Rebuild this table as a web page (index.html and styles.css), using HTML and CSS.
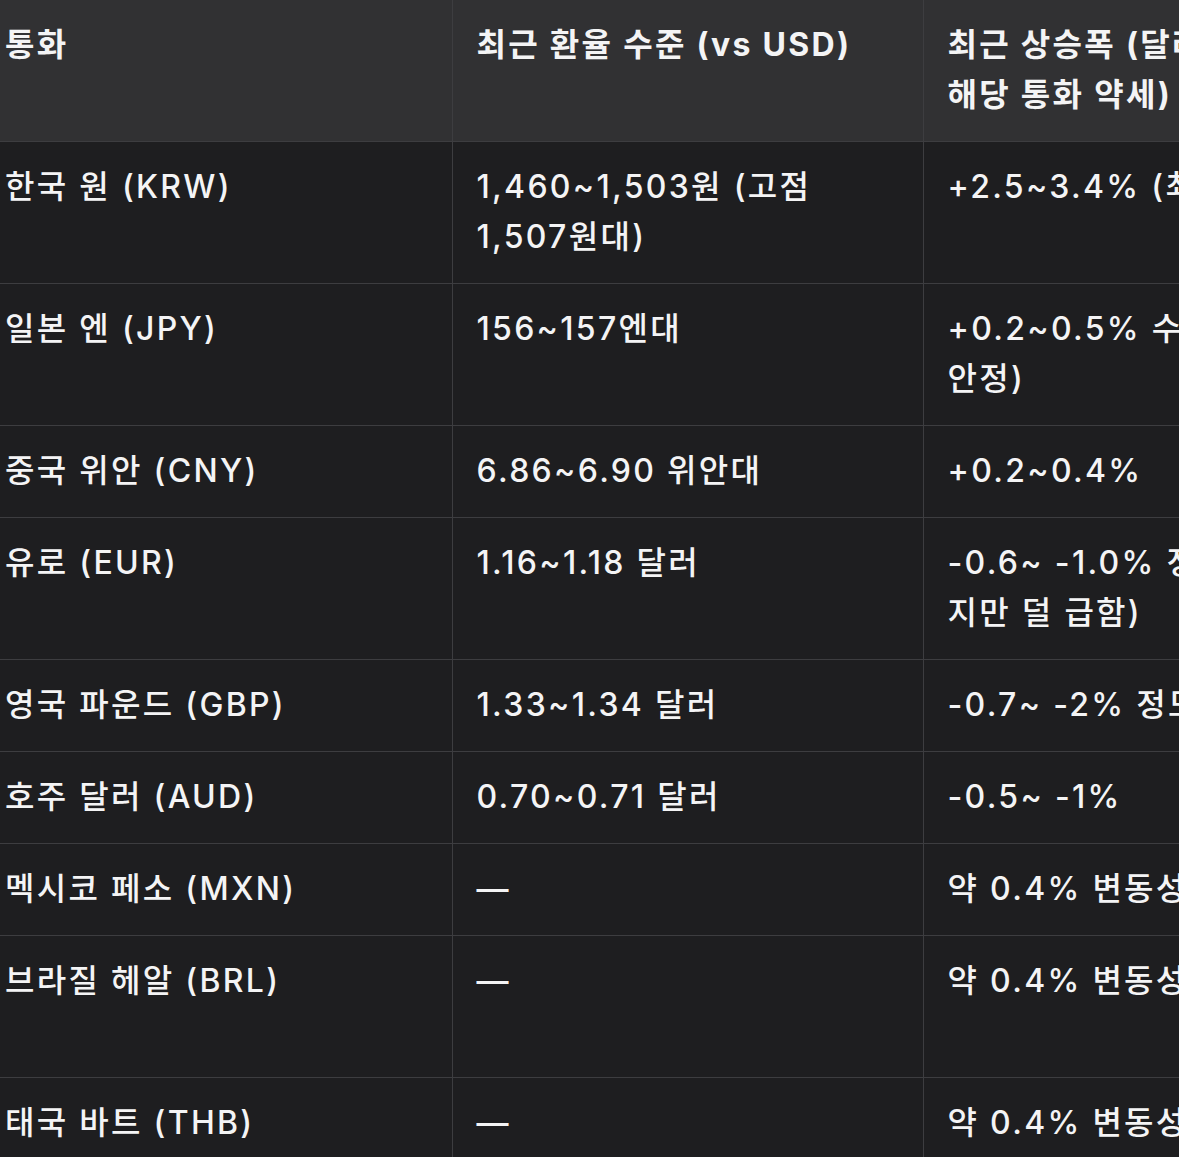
FILE: index.html
```html
<!DOCTYPE html>
<html lang="ko">
<head>
<meta charset="utf-8">
<link rel="stylesheet" href="styles.css">
</head>
<body>
<div class="viewport">
<table class="fx">
<colgroup><col class="c"><col class="c"><col class="c"><col class="c"></colgroup>
<thead>
<tr><th>통화</th><th>최근 환율 수준 (vs USD)</th><th>최근 상승폭 (달러 대비<br>해당 통화 약세)</th><th>비고</th></tr>
</thead>
<tbody>
<tr><td>한국 원 (KRW)</td><td>1,460~1,503원 (고점<br>1,507원대)</td><td>+2.5~3.4% (최근 급등)</td><td>원화 약세 두드러짐</td></tr>
<tr><td>일본 엔 (JPY)</td><td>156~157엔대</td><td>+0.2~0.5% 수준 (비교적<br>안정)</td><td>큰 변동 없음</td></tr>
<tr><td>중국 위안 (CNY)</td><td>6.86~6.90 위안대</td><td>+0.2~0.4%</td><td>관리 변동</td></tr>
<tr><td>유로 (EUR)</td><td>1.16~1.18 달러</td><td>-0.6~ -1.0% 정도 (약세<br>지만 덜 급함)</td><td>완만한 약세</td></tr>
<tr><td>영국 파운드 (GBP)</td><td>1.33~1.34 달러</td><td>-0.7~ -2% 정도</td><td>완만한 약세</td></tr>
<tr><td>호주 달러 (AUD)</td><td>0.70~0.71 달러</td><td>-0.5~ -1%</td><td>원자재 영향</td></tr>
<tr><td>멕시코 페소 (MXN)</td><td>—</td><td>약 0.4% 변동성</td><td>신흥국</td></tr>
<tr><td>브라질 헤알 (BRL)</td><td>—</td><td>약 0.4% 변동성</td><td>신흥국 통화<br>변동성 큼</td></tr>
<tr><td>태국 바트 (THB)</td><td>—</td><td>약 0.4% 변동성</td><td>신흥국</td></tr>
</tbody>
</table>
</div>
</body>
</html>
```
FILE: styles.css
```css
html, body {
  margin: 0;
  padding: 0;
  background: #1e1e20;
}
.viewport {
  width: 1179px;
  height: 1157px;
  overflow: hidden;
}
.fx {
  margin-left: -19px;
  table-layout: fixed;
  border-collapse: collapse;
  width: 1884px;
  font-family: Inter, "Noto Sans CJK KR", sans-serif;
  font-size: 32px;
  line-height: 50px;
  letter-spacing: 2.3px;
  color: #f4f4f5;
}
.fx .c { width: 471px; }
.fx th, .fx td {
  text-align: left;
  vertical-align: top;
  padding: 20px 24px 21px 24px;
  border-right: 1px solid #3d3d40;
  border-bottom: 1px solid #3d3d40;
  white-space: nowrap;
  overflow: hidden;
}
.fx th {
  background: #313133;
  font-weight: 700;
}
.fx td {
  background: #1e1e20;
  font-weight: 500;
}
```
